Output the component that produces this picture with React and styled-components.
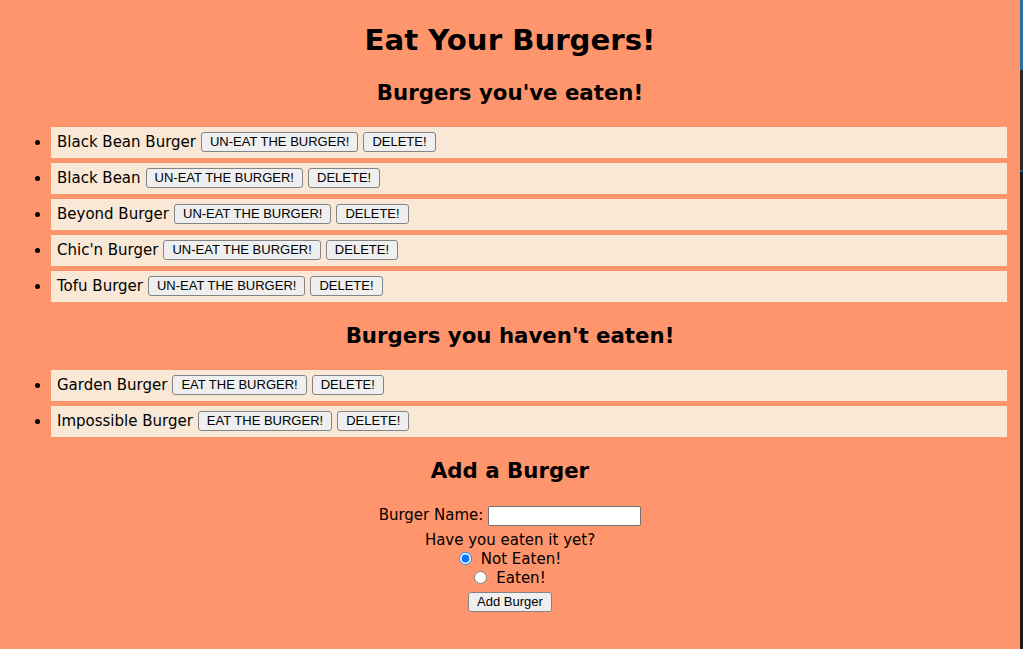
import React from "react";
import styled, { createGlobalStyle } from "styled-components";

const GlobalStyle = createGlobalStyle`
  html {
    background: linear-gradient(to bottom, #2c6da3 0, #2c6da3 70px, #2a2a2a 70px, #2a2a2a 170px, #1d5b8c 170px, #1d5b8c 172px, #1b1b1b 172px);
    min-height: 100%;
  }
  body {
    margin: 0;
    font-family: "DejaVu Sans", "Liberation Sans", sans-serif;
    color: #000;
  }
`;

const eaten = [
  "Black Bean Burger",
  "Black Bean",
  "Beyond Burger",
  "Chic'n Burger",
  "Tofu Burger",
];

const notEaten = ["Garden Burger", "Impossible Burger"];

const Page = styled.div`
  width: 1020px;
  min-height: 649px;
  box-sizing: border-box;
  padding: 0 8px;
  background: #ff956c;
  display: flow-root;
`;

const Title = styled.h1`
  margin: 21px 0 20px;
  font-size: 29.2px;
  line-height: 38px;
  font-weight: bold;
  text-align: center;
`;

const SectionTitle = styled.h2`
  margin: 20px 0;
  font-size: 21.3px;
  line-height: 28px;
  font-weight: bold;
  text-align: center;
`;

const List = styled.ul`
  margin: 0;
  padding-left: 40px;
  list-style: disc;
`;

const Item = styled.li`
  margin: 5px 5px 5px 3px;
  padding: 5px 5px 5px 6px;
  height: 21px;
  line-height: 21px;
  font-size: 15px;
  background: #f9e8d6;
`;

const Button = styled.button`
  height: 20px;
  margin-left: 5px;
  padding: 0 8px;
  vertical-align: middle;
  position: relative;
  top: -1px;
  font-family: "Liberation Sans", Arial, sans-serif;
  font-size: 13px;
  line-height: 18px;
  color: #000;
  background: #efefef;
  border: 1px solid #848484;
  border-radius: 3px;
`;

const Form = styled.form`
  font-size: 15px;
  line-height: 19px;
  text-align: center;
`;

const NameRow = styled.div`
  display: flex;
  justify-content: center;
  align-items: center;
  gap: 5px;
  height: 21px;
  margin-bottom: 5px;
`;

const TextInput = styled.input`
  width: 153px;
  height: 20px;
  box-sizing: border-box;
  margin: 0;
  padding: 1px 2px;
  border: 1px solid #707070;
  border-radius: 2px;
  background: #fff;
`;

const RadioLine = styled.label`
  display: block;
  height: 19px;
`;

const Radio = styled.input`
  width: 13px;
  height: 13px;
  margin: 0 9px 0 0;
  vertical-align: -1px;
  accent-color: #0a75f5;
`;

const Submit = styled(Button)`
  margin: 4px 0 0;
  top: 0;
`;

const BurgerRow = ({ name, devoured }) => (
  <Item>
    {name}
    <Button type="button">
      {devoured ? "UN-EAT THE BURGER!" : "EAT THE BURGER!"}
    </Button>
    <Button type="button">DELETE!</Button>
  </Item>
);

export default function App() {
  return (
    <>
      <GlobalStyle />
      <Page>
        <Title>Eat Your Burgers!</Title>

        <SectionTitle>Burgers you've eaten!</SectionTitle>
        <List>
          {eaten.map((b) => (
            <BurgerRow key={b} name={b} devoured />
          ))}
        </List>

        <SectionTitle>Burgers you haven't eaten!</SectionTitle>
        <List>
          {notEaten.map((b) => (
            <BurgerRow key={b} name={b} />
          ))}
        </List>

        <SectionTitle>Add a Burger</SectionTitle>
        <Form onSubmit={(e) => e.preventDefault()}>
          <NameRow>
            <span>Burger Name:</span>
            <TextInput type="text" />
          </NameRow>
          <div>Have you eaten it yet?</div>
          <RadioLine>
            <Radio type="radio" name="devoured" defaultChecked />
            Not Eaten!
          </RadioLine>
          <RadioLine>
            <Radio type="radio" name="devoured" />
            Eaten!
          </RadioLine>
          <Submit type="submit">Add Burger</Submit>
        </Form>
      </Page>
    </>
  );
}
